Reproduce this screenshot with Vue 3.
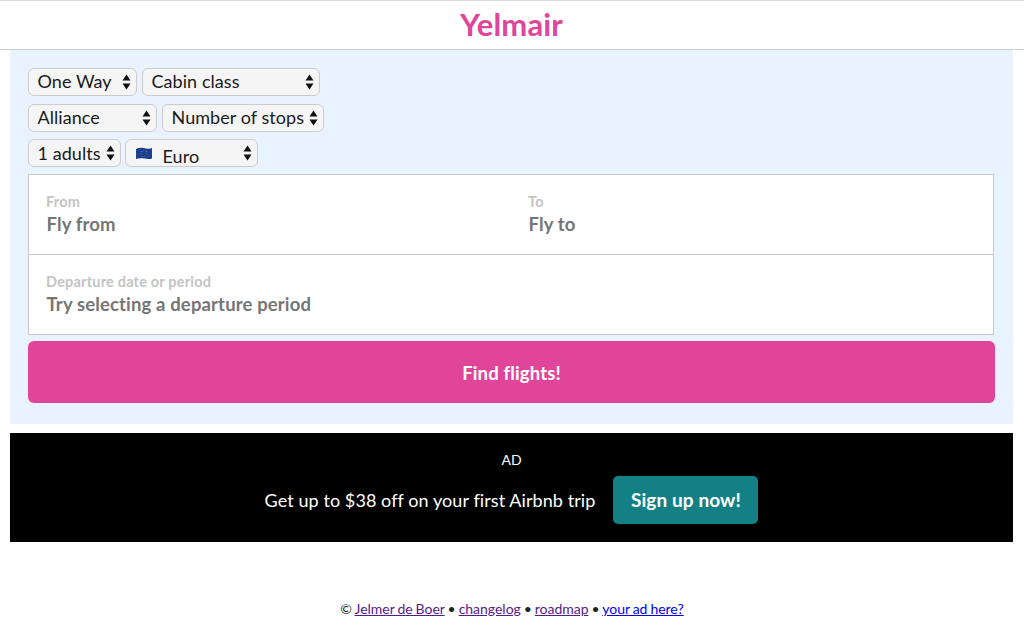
<script setup>
const selectRows = [
  [
    { label: 'One Way', width: 109 },
    { label: 'Cabin class', width: 178 },
  ],
  [
    { label: 'Alliance', width: 129 },
    { label: 'Number of stops', width: 162 },
  ],
  [
    { label: '1 adults', width: 93 },
    { label: 'Euro', width: 133, flag: true },
  ],
]
const links = [
  { text: 'Jelmer de Boer', visited: true, sep: ' • ' },
  { text: 'changelog', visited: true, sep: ' • ' },
  { text: 'roadmap', visited: true, sep: ' • ' },
  { text: 'your ad here?', visited: false, sep: '' },
]
</script>

<template>
  <div class="page">
    <header class="header"><h1 class="logo">Yelmair</h1></header>

    <main class="content">
      <section class="panel">
        <div class="rows">
          <div v-for="(row, i) in selectRows" :key="i" class="row" :class="'row-' + i">
            <div
              v-for="s in row"
              :key="s.label"
              class="select"
              :style="{ width: s.width + 'px' }"
            >
              <svg v-if="s.flag" class="flag" width="18" height="13" viewBox="0 0 18 13">
                <path d="M1 2 C5 0.6 8 0.6 11 1.4 C13.5 2 15.5 1.8 17 1 L17 11.4 C14.5 12.4 12 12.2 9.5 11.6 C6.5 11 3.5 11 1 12 Z" fill="#1c3f94" />
                <circle cx="9" cy="3.4" r="0.5" fill="#8f8f5a" />
                <circle cx="11.5" cy="4.6" r="0.5" fill="#8f8f5a" />
                <circle cx="12" cy="7" r="0.5" fill="#8f8f5a" />
                <circle cx="10" cy="9.2" r="0.5" fill="#8f8f5a" />
                <circle cx="7.5" cy="9" r="0.5" fill="#8f8f5a" />
                <circle cx="6" cy="6.7" r="0.5" fill="#8f8f5a" />
                <circle cx="6.6" cy="4.4" r="0.5" fill="#8f8f5a" />
              </svg>
              <span class="select-label" :class="{ 'select-label-flag': s.flag }">{{ s.label }}</span>
              <svg class="arrows" width="9" height="16" viewBox="0 0 9 16">
                <path d="M4.5 0.5 L8.5 6.5 L0.5 6.5 Z M4.5 15.5 L8.5 9.5 L0.5 9.5 Z" fill="#111" />
              </svg>
            </div>
          </div>
        </div>

        <div class="form">
          <div class="form-row form-row-split">
            <div class="field">
              <div class="field-label">From</div>
              <div class="field-value">Fly from</div>
            </div>
            <div class="field">
              <div class="field-label">To</div>
              <div class="field-value">Fly to</div>
            </div>
          </div>
          <div class="form-row">
            <div class="field">
              <div class="field-label">Departure date or period</div>
              <div class="field-value">Try selecting a departure period</div>
            </div>
          </div>
        </div>

        <button class="find" type="button">Find flights!</button>
      </section>

      <section class="ad">
        <div class="ad-tag">AD</div>
        <div class="ad-row">
          <span class="ad-text">Get up to $38 off on your first Airbnb trip</span>
          <a class="ad-button">Sign up now!</a>
        </div>
      </section>
    </main>

    <footer class="footer">
      © <template v-for="l in links" :key="l.text"><a class="link" :class="{ visited: l.visited }">{{ l.text }}</a>{{ l.sep }}</template>
    </footer>
  </div>
</template>

<style>
html, body { margin: 0; background: #fff; }
</style>

<style scoped>
.page {
  width: 1024px;
  height: 629px;
  overflow: hidden;
  font-family: Lato, "Noto Sans", sans-serif;
  color: #111;
  box-sizing: border-box;
  border-top: 1px solid #dcdce0;
}
.header {
  height: 48px;
  border-bottom: 1px solid #ccc;
  display: flex;
  justify-content: center;
}
.logo {
  margin: 0 1px 0 0;
  font-size: 31px;
  font-weight: 700;
  letter-spacing: 0.15px;
  color: #e0459a;
  line-height: 47px;
}
.content {
  padding: 0 11px 0 10px;
}
.panel {
  background: #e8f3ff;
  padding: 18px 18px 21px;
  height: 374px;
  box-sizing: border-box;
}
.rows {
  display: flex;
  flex-direction: column;
}
.row {
  display: flex;
  gap: 5px;
  height: 28px;
}
.row-0 { margin-bottom: 8px; }
.row-1 { margin-bottom: 7px; height: 28px; }
.row-2 { gap: 4px; margin-bottom: 7px; }
.select {
  box-sizing: border-box;
  display: flex;
  align-items: center;
  justify-content: space-between;
  background: #f5f5f5;
  border: 1px solid #ccc;
  border-radius: 6px;
  padding: 0 5px 0 8.5px;
  font-size: 18px;
  letter-spacing: 0.06px;
}
.row-0 .select-label,
.row-1 .select-label {
  position: relative;
  top: -1px;
}
.select-label {
  white-space: nowrap;
  color: #1a1a1a;
}
.select-label-flag {
  margin-left: 10px;
  margin-right: auto;
  position: relative;
  top: 3px;
}
.flag { flex: none; }
.arrows { flex: none; }
.form {
  width: 966px;
  background: #fff;
  border: 1px solid #c8c8c8;
  box-sizing: border-box;
  height: 161px;
}
.form-row {
  height: 79px;
  box-sizing: border-box;
  padding-left: 17px;
}
.form-row + .form-row { border-top: 1px solid #c8c8c8; height: 80px; }
.form-row-split {
  display: grid;
  grid-template-columns: 482px 1fr;
}
.field { padding-top: 19px; }
.field-label {
  font-size: 14.5px;
  line-height: 16px;
  font-weight: 700;
  letter-spacing: 0.2px;
  color: #c4c4c4;
}
.field-value {
  font-size: 18.5px;
  line-height: 24px;
  margin-top: 2px;
  margin-left: 0.5px;
  font-weight: 700;
  letter-spacing: 0.14px;
  color: #757575;
}
.find {
  display: block;
  width: 967px;
  height: 62px;
  margin-top: 6px;
  padding-top: 2px;
  border: 0;
  border-radius: 6px;
  background: #e0459a;
  color: #fff;
  font: 700 18.5px Lato, "Noto Sans", sans-serif;
  letter-spacing: 0.15px;
}
.ad {
  margin-top: 9px;
  height: 109px;
  background: #000;
  color: #fff;
  display: flex;
  flex-direction: column;
  align-items: center;
  box-sizing: border-box;
  padding-top: 18px;
}
.ad-tag {
  font-size: 14px;
  line-height: 17px;
}
.ad-row {
  margin-top: 8px;
  display: flex;
  align-items: center;
  gap: 18px;
}
.ad-text { font-size: 18px; letter-spacing: 0.08px; }
.ad-button {
  width: 145px;
  height: 48px;
  display: flex;
  align-items: center;
  justify-content: center;
  padding-bottom: 2px;
  box-sizing: border-box;
  background: #128085;
  border-radius: 5px;
  font-size: 19px;
  font-weight: 700;
  letter-spacing: 0.1px;
}
.footer {
  margin-top: 58px;
  text-align: center;
  font-size: 14px;
  line-height: 18px;
  letter-spacing: -0.02px;
  word-spacing: -0.6px;
  color: #222;
}
.link { color: #00e; text-decoration: underline; }
.link.visited { color: #551a8b; }
</style>
